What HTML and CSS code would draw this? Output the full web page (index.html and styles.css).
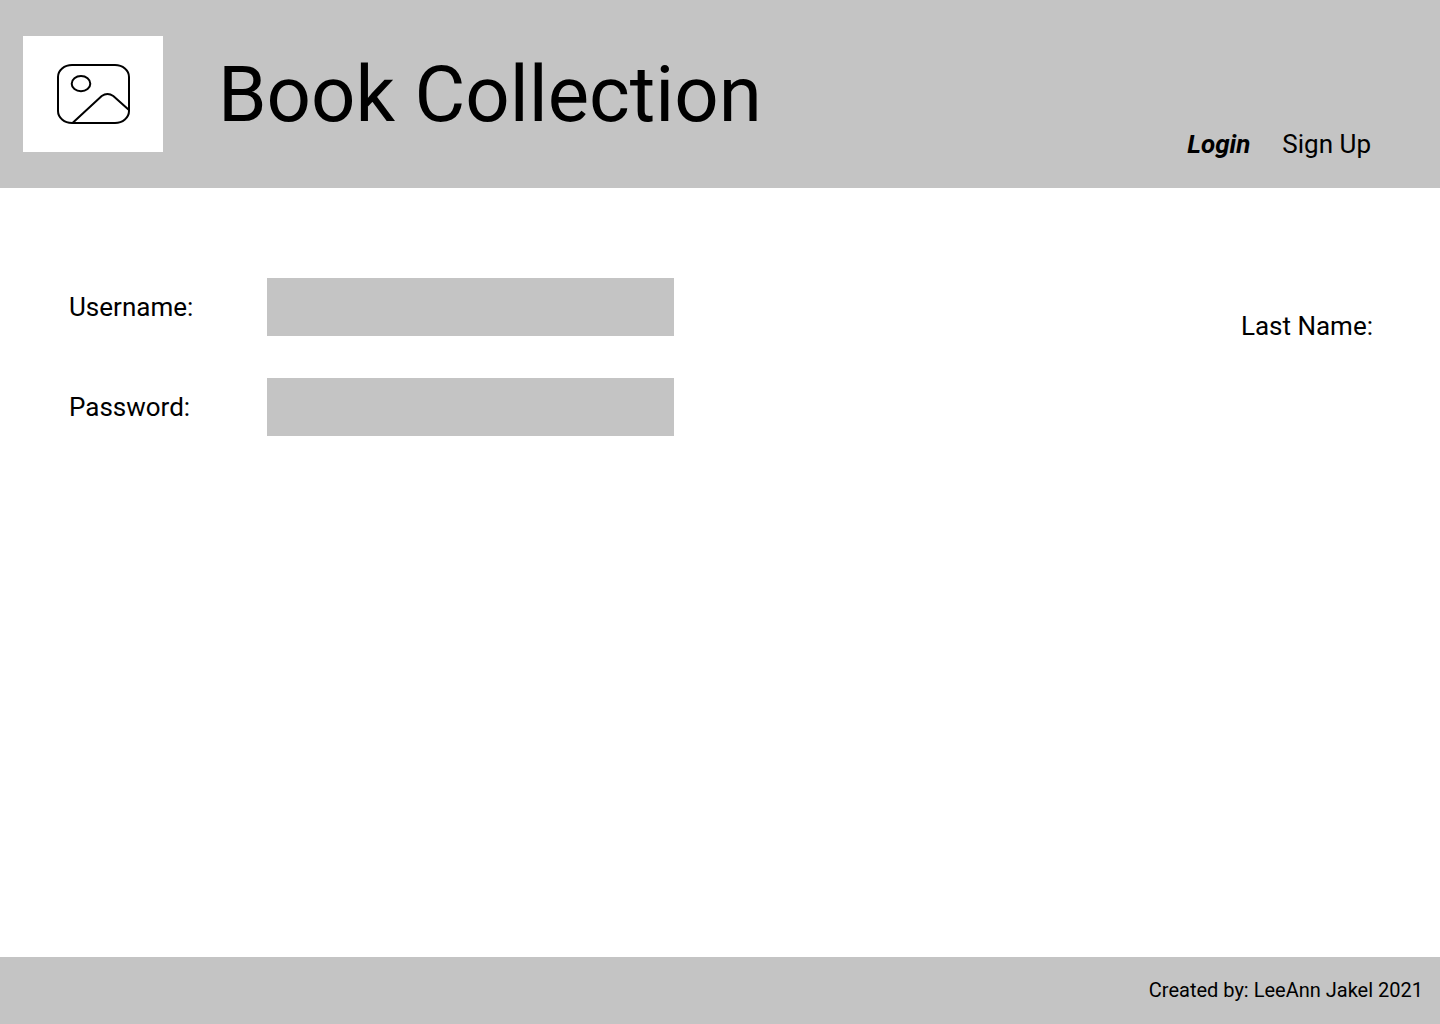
FILE: index.html
```html
<!DOCTYPE html>
<html lang="en">
<head>
<meta charset="utf-8">
<meta name="viewport" content="width=device-width, initial-scale=1">
<title>Book Collection</title>
<link rel="stylesheet" href="styles.css">
</head>
<body>
<header class="header">
  <div class="logo">
    <svg width="74" height="62" viewBox="0 0 74 62" fill="none" stroke="#000" stroke-width="2" aria-hidden="true">
      <rect x="2" y="2" width="71" height="58" rx="14" ry="12"/>
      <ellipse cx="25" cy="20.700" rx="9.300" ry="7.600"/>
      <path d="M16.500 60L45.700 33Q51.500 28.800 57.300 33L73 47"/>
    </svg>
  </div>
  <h1 class="title">Book Collection</h1>
  <nav class="nav">
    <a class="nav-link nav-link-active" href="#login" aria-current="page">Login</a>
    <a class="nav-link" href="#signup">Sign Up</a>
  </nav>
</header>
<main class="main">
  <form class="form">
    <div class="field">
      <label for="username">Username:</label>
      <input class="input" id="username" type="text">
    </div>
    <div class="field">
      <label for="password">Password:</label>
      <input class="input" id="password" type="password">
    </div>
  </form>
  <p class="aside">Last Name:</p>
</main>
<footer class="footer">Created by: LeeAnn Jakel 2021</footer>
</body>
</html>
```

FILE: styles.css
```css
* {
  box-sizing: border-box;
}

body {
  display: flex;
  flex-direction: column;
  min-height: 100vh;
  margin: 0;
  background: #fff;
  color: #000;
  font-family: Roboto, sans-serif;
  font-size: 26px;
  line-height: 30px;
}

.header {
  display: flex;
  align-items: center;
  padding: 36px 69px 36px 23px;
  background: #c4c4c4;
}

.logo {
  display: flex;
  align-items: center;
  justify-content: center;
  width: 140px;
  height: 116px;
  background: #fff;
}

.title {
  margin: 0 0 0 55px;
  padding-top: 2px;
  font-size: 78px;
  font-weight: 400;
  line-height: 92px;
}

.nav {
  display: flex;
  align-self: flex-end;
  gap: 32px;
  margin-left: auto;
  margin-bottom: -7px;
}

.nav-link {
  color: inherit;
  text-decoration: none;
}

.nav-link-active {
  font-style: italic;
  font-weight: 700;
}

.main {
  display: flex;
  flex: 1;
  justify-content: space-between;
  padding: 90px 67px 90px 69px;
}

.form {
  display: flex;
  flex-direction: column;
  gap: 42px;
}

.field {
  display: grid;
  grid-template-columns: 198px 407px;
  align-items: center;
}

.input {
  width: 100%;
  height: 58px;
  padding: 0 16px;
  border: 0;
  border-radius: 0;
  background: #c4c4c4;
  font: inherit;
}

.aside {
  margin: 33px 0 0;
}

.footer {
  padding: 18px 17px;
  background: #c4c4c4;
  font-size: 20px;
  line-height: 31px;
  text-align: right;
}
```
